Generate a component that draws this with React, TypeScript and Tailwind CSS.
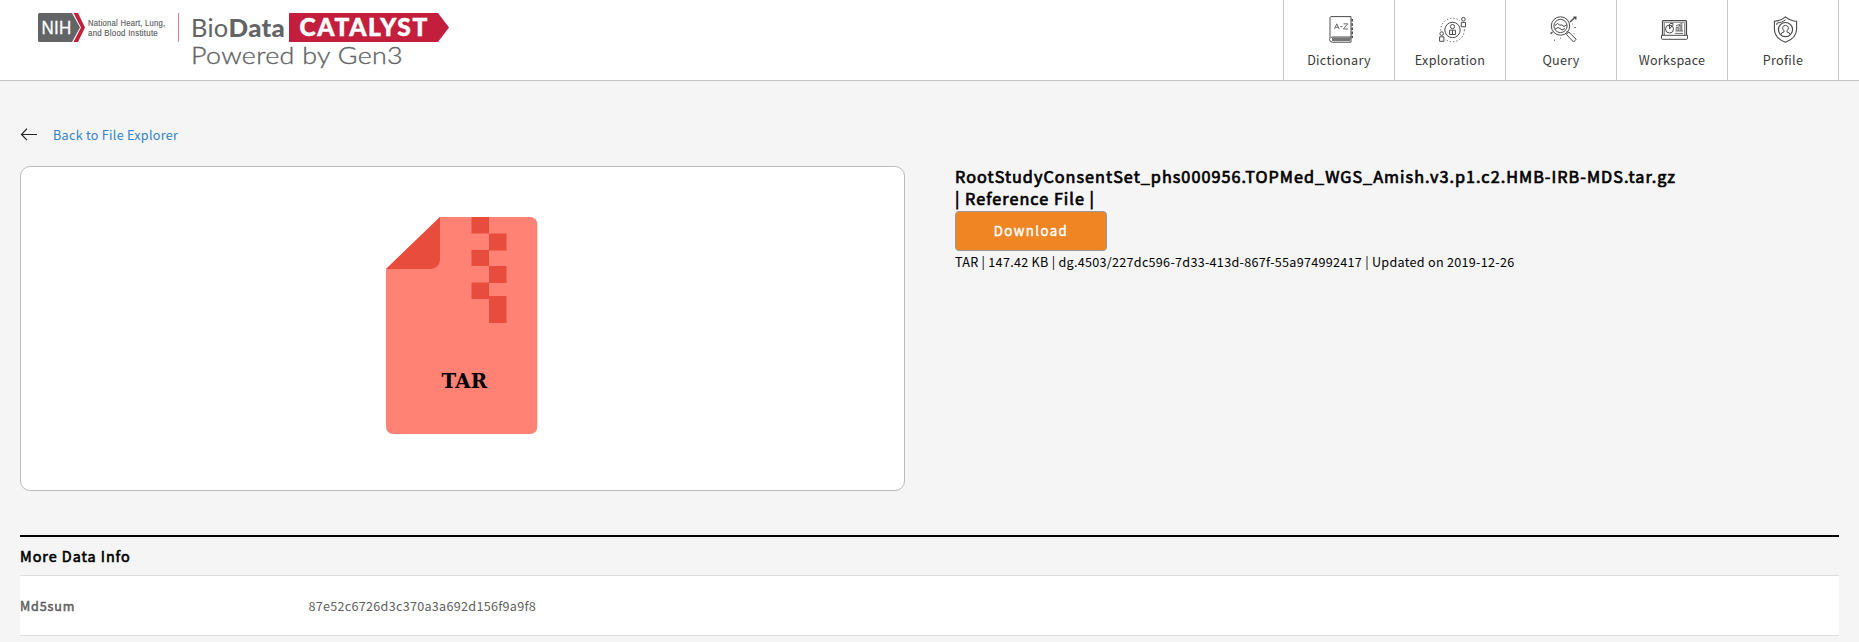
import React from "react";

const s = { fill: "none", stroke: "#4a4a4a", strokeWidth: 1 };

function DictionaryIcon() {
  return (
    <svg width="27" height="27" viewBox="0 0 27 27" {...s}>
      <path d="M2.500 .6H23V21H4.5Q1.5 21 1.5 23.5Q1.5 26.2 4.5 26.2H23V21" />
      <path d="M2 1V22.500" stroke="#aaa" strokeWidth="2" />
      <path d="M4 22.500H23M4 24H22" strokeWidth="1.8" stroke="#777" />
      <path d="M24.2 3V22" strokeDasharray="2.6 1.6" strokeWidth="1.6" />
      <path d="M6.5 13L8.8 7.8L11.2 13M7.3 11.3H10.3M12.2 10.6H14.4M15.5 7.8H19.7L15.4 13H20" strokeWidth=".8" />
    </svg>
  );
}

function ExplorationIcon() {
  return (
    <svg width="27" height="27" viewBox="0 0 27 27" {...s}>
      <circle cx="13.5" cy="14" r="7.7" />
      <circle cx="13.5" cy="14" r="11.8" strokeDasharray="1.3 2" strokeWidth=".9" />
      <circle cx="13.5" cy="10.6" r="2.1" />
      <path d="M10.6 18.5V14.2H16.4V18.5ZM13.5 14.2V18.5" />
      <path d="M-.5 16H6V27H-.5ZM21 0H27.5V11.500H21Z" fill="#fff" stroke="none" />
      <circle cx="2.7" cy="17.6" r="1.8" />
      <path d="M.6 20.8H4.9V25.3H.6Z" />
      <circle cx="24.4" cy="3.2" r="1.8" />
      <path d="M22.3 6.4H26.5V10.8H22.3Z" />
    </svg>
  );
}

function QueryIcon() {
  return (
    <svg width="27" height="27" viewBox="0 0 27 27" {...s}>
      <circle cx="10.500" cy="10" r="9.2" />
      <circle cx="10.500" cy="10" r="6.6" />
      <path d="M5 9.500L7.500 7.500L9.500 9H12L14 10.500L16.500 9M5 13L8 11.500L10 12.500L12 14L15 12.500" />
      <path d="M16.3 18.4L18.700 16L26.2 23.2L23.6 26ZM18 16.4L16.700 15" />
      <path d="M20 6L25.5 1M23.500 1.200H25.8V3.4M.5 17.8L2.500 16" strokeWidth="1.4" />
      <path d="M24 11.5H26M22 8H23M4.5 23.500V25M10.5 21.500V22.7M23.500 17.5H24.500" strokeWidth=".7" />
    </svg>
  );
}

function WorkspaceIcon() {
  return (
    <svg width="27" height="27" viewBox="0 0 27 27" {...s}>
      <path d="M1.6 19V5.4Q1.6 4.6 2.4 4.6H24.6Q25.4 4.6 25.4 5.4V19" strokeWidth="1.4" />
      <path d="M3.5 19V6.4H23.5V19" strokeWidth=".6" />
      <path d="M.5 19.3H26.5V22.4Q26.5 23.3 25.5 23.3H1.5Q.5 23.3.5 22.4Z" />
      <circle cx="8.5" cy="13" r="4" />
      <path d="M8.5 13V8.2M8.5 13L11.3 9.5M9 7.5L12 7.6V9.5" />
      <path d="M15.2 14.8V11.2H17V14.8M18 14.8V9.5H19.8V14.8M20.8 14.8V8M14.5 15H22M15 9.8L21.5 7.2M14 17.4H22" strokeWidth=".8" />
    </svg>
  );
}

function ProfileIcon() {
  return (
    <svg width="27" height="27" viewBox="0 0 27 27" {...s}>
      <path d="M13.5.8Q18.5 5 24.6 5.2V13Q24.6 22 13.5 26.3Q2.4 22 2.4 13V5.2Q8.5 5 13.5.8Z" strokeWidth="1.1" />
      <path d="M4.8 9V7.2Q9.6 6.8 13.5 4" />
      <circle cx="13.5" cy="13.6" r="7.1" strokeWidth="1.2" />
      <path d="M9 18.6Q9.2 16.4 12 16V14.8Q10.3 13.2 10.7 11.3Q11.2 9.4 13.5 9.4T16.3 11.3Q16.7 13.2 15 14.8V16Q17.8 16.4 18 18.6" />
    </svg>
  );
}

function Logo() {
  return (
    <svg width="430" height="76" viewBox="0 0 430 76" role="img" aria-label="NHLBI BioData Catalyst">
      <path d="M19.5 13H52L60 27.5L52 42H19.5Q18 42 18 40.5V14.5Q18 13 19.5 13Z" fill="#636466" />
      <path d="M53.500 13H58L65 27.5L58 42H53.500L61 27.5Z" fill="#c31f3d" />
      <text x="21.500" y="34" fontFamily="Liberation Sans" fontSize="18.500" stroke="#fff" strokeWidth=".3" fill="#fff" textLength="30" lengthAdjust="spacingAndGlyphs">NIH</text>
      <text x="68" y="26" fontFamily="Liberation Sans" fontSize="8.7" fill="#5b5c5e" stroke="#5b5c5e" strokeWidth=".15" textLength="77.500" lengthAdjust="spacingAndGlyphs">National Heart, Lung,</text>
      <text x="68" y="36" fontFamily="Liberation Sans" fontSize="8.7" fill="#5b5c5e" stroke="#5b5c5e" strokeWidth=".15" textLength="70" lengthAdjust="spacingAndGlyphs">and Blood Institute</text>
      <path d="M158.5 13V42" stroke="#dd8296" />
      <text x="171" y="36.5" fontFamily="Lato" fontSize="25" fill="#636466" textLength="37.500" lengthAdjust="spacingAndGlyphs">Bio</text>
      <text x="208.500" y="36.5" fontFamily="Lato" fontWeight="900" fontSize="25" fill="#636466" textLength="56.500" lengthAdjust="spacingAndGlyphs">Data</text>
      <path d="M269 13H418L429 27.500L418 42H269Z" fill="#c31f3d" />
      <text x="279.500" y="36" fontFamily="Lato" fontWeight="900" fontSize="24.500" fill="#fff" stroke="#fff" strokeWidth=".5" textLength="128" lengthAdjust="spacing">CATALYST</text>
      <text x="171" y="63.500" fontFamily="Lato" fontWeight="300" fontSize="24" fill="#636466" stroke="#636466" strokeWidth=".35" textLength="212" lengthAdjust="spacingAndGlyphs">Powered by Gen3</text>
    </svg>
  );
}

const nav = [
  { label: "Dictionary", Icon: DictionaryIcon },
  { label: "Exploration", Icon: ExplorationIcon },
  { label: "Query", Icon: QueryIcon },
  { label: "Workspace", Icon: WorkspaceIcon },
  { label: "Profile", Icon: ProfileIcon },
];

function TarIcon() {
  return (
    <svg width="152" height="217" viewBox="0 0 152 217">
      <path d="M54 0H143.500Q151.300 0 151.300 8V209Q151.300 217 143.500 217H8Q0 217 0 209V52Z" fill="#ff8274" />
      <path d="M54 0V43Q53 51 45 52H0Z" fill="#e84c3d" />
      <path d="M85.500 0H103V16.500H120.500V33.500H103V49H120.500V66H103V79H120.500V106H103V82H85.500V65.500H103V49H85.500V33H103V16.500H85.500Z" fill="#e84c3d" />
      <text x="55.500" y="171" fontFamily="DejaVu Serif" fontWeight="700" fontSize="20.500" textLength="46" lengthAdjust="spacingAndGlyphs">TAR</text>
    </svg>
  );
}

export default function App() {
  return (
    <div className="h-[642px] overflow-hidden bg-[#f5f5f5] font-['Noto_Sans_CJK_SC',sans-serif] text-[12.6px] tracking-[0.28px] text-black">
      <header className="flex h-[81px] justify-between border-b border-[#c7c7c7] bg-white px-5">
        <Logo />
        <nav className="flex border-l border-[#c7c7c7]">
          {nav.map(({ label, Icon }) => (
            <a key={label} className="flex w-[111px] flex-col items-center border-r border-[#c7c7c7] pt-4 text-[#3a3a3a]">
              <span className="pl-1">
                <Icon />
              </span>
              <span className="mt-[7px] leading-5">{label}</span>
            </a>
          ))}
        </nav>
      </header>
      <main className="px-5">
        <a className="mt-[44px] flex h-5 items-center">
          <svg className="mb-0.5" width="17" height="13" viewBox="0 0 17 13" fill="none" stroke="#222" strokeWidth="1.2">
            <path d="M7 .7L1.500 6.500L7 12.200M1.500 6.500H17" />
          </svg>
          <span className="ml-4 leading-5 text-[#3283c8]">Back to File Explorer</span>
        </a>
        <div className="mt-[21px] flex">
          <section className="flex h-[325px] w-[885px] justify-center rounded-[10px] border border-[#bbb] bg-white pt-[50px] pr-[2px]">
            <TarIcon />
          </section>
          <section className="ml-[50px] flex w-[730px] flex-col items-start">
            <h1 className="-mt-px text-[16.2px] leading-[22px] font-normal tracking-[1.03px] whitespace-nowrap [-webkit-text-stroke:0.7px_black]">
              RootStudyConsentSet_phs000956.TOPMed_WGS_Amish.v3.p1.c2.HMB-IRB-MDS.tar.gz
              <br />| Reference File |
            </h1>
            <button className="mt-0.5 h-10 w-[152px] rounded-[4px] border border-[#999] bg-[#ef8523] pb-px text-[13.3px] font-normal tracking-[1.4px] text-white [-webkit-text-stroke:0.4px_white]">
              Download
            </button>
            <p className="mt-px leading-5">
              TAR | 147.42 KB | dg.4503/227dc596-7d33-413d-867f-55a974992417 | Updated on 2019-12-26
            </p>
          </section>
        </div>
        <section className="mt-11 border-t-2 border-black">
          <h2 className="h-[38px] text-[14.4px] leading-[37px] font-normal tracking-[0.95px] [-webkit-text-stroke:0.6px_black]">More Data Info</h2>
          <div className="flex h-[61px] items-center border-y border-[#dedede] bg-white pt-px text-[#606060]">
            <div className="w-[288.5px] tracking-[0.85px] [-webkit-text-stroke:0.5px_#606060]">Md5sum</div>
            <div>87e52c6726d3c370a3a692d156f9a9f8</div>
          </div>
        </section>
      </main>
    </div>
  );
}
